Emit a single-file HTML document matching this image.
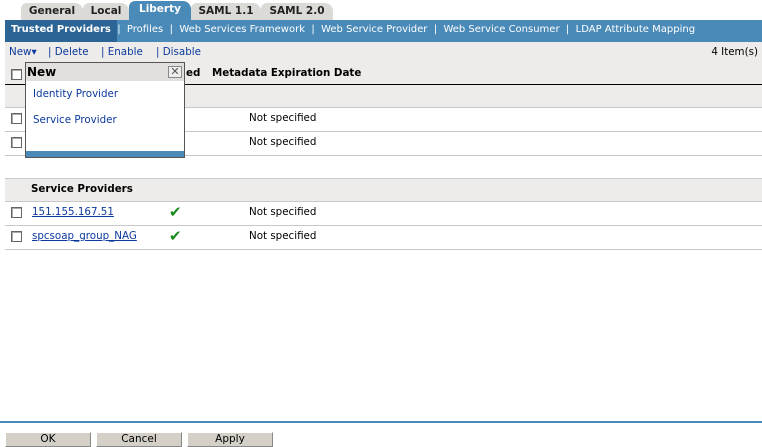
<!DOCTYPE html>
<html><head><style>
*{margin:0;padding:0;box-sizing:border-box}
body{width:762px;height:447px;background:#fff;font-family:"DejaVu Sans","Liberation Sans",sans-serif;font-size:10.3px;position:relative;overflow:hidden;color:#000}
.a{position:absolute;white-space:pre}
.tab{position:absolute;top:3px;height:17px;background:#dcdad6;border-radius:6px 8px 0 0;font-weight:bold;font-size:10.5px;padding:2px 0 0 0;text-align:center;color:#222}
.cb{position:absolute;width:11px;height:11px;border:1px solid #666;background:#fff;box-shadow:inset 1px 1px 0 #aaa}
.ln{position:absolute;left:5px;width:757px;height:1px;background:#c8c8c8}
a{color:#0b3a9c;text-decoration:underline}
.btn{position:absolute;top:432px;height:15px;background:#d4d0c8;border:1px solid #888;border-top-color:#fff;border-left-color:#fff;text-align:center;font-size:10.5px;line-height:13px}
</style></head><body>
<div class="tab" style="left:21px;width:62px">General</div>
<div class="tab" style="left:83px;width:46px">Local</div>
<div class="tab" style="left:129px;width:62px;background:#4a8ab8;color:#fff;top:1px;height:19px">Liberty</div>
<div class="tab" style="left:191px;width:70px">SAML 1.1</div>
<div class="tab" style="left:261px;width:72px">SAML 2.0</div>
<div class="a" style="left:5px;top:20px;width:757px;height:22px;background:#4a8ab8"></div>
<div class="a" style="left:5px;top:20px;width:112px;height:22px;background:#2d6496"></div>
<div class="a" style="left:11px;top:24px;color:#fff;font-size:10px"><b>Trusted Providers</b>  |  Profiles  |  Web Services Framework  |  Web Service Provider  |  Web Service Consumer  |  LDAP Attribute Mapping</div>
<div class="a" style="left:5px;top:42px;width:757px;height:42px;background:#eeecea"></div>
<div class="a" style="left:5px;top:84px;width:757px;height:1px;background:#000"></div>
<div class="a" style="left:9px;top:46px;color:#0b3a9c">New▾</div>
<div class="a" style="left:48px;top:46px;color:#0b3a9c">| Delete</div>
<div class="a" style="left:101px;top:46px;color:#0b3a9c">| Enable</div>
<div class="a" style="left:156px;top:46px;color:#0b3a9c">| Disable</div>
<div class="a" style="right:4px;top:46px">4 Item(s)</div>
<div class="a" style="left:212px;top:67px;font-weight:bold">Metadata Expiration Date</div>
<div class="a" style="left:186px;top:67px;font-weight:bold">ed</div>
<div class="cb" style="left:11px;top:69px"></div>
<div class="a" style="left:5px;top:85px;width:757px;height:22px;background:#eeecea"></div>
<div class="ln" style="top:107px"></div>
<div class="cb" style="left:11px;top:113px"></div><div class="a" style="left:249px;top:112px">Not specified</div>
<div class="ln" style="top:131px"></div>
<div class="cb" style="left:11px;top:137px"></div><div class="a" style="left:249px;top:136px">Not specified</div>
<div class="ln" style="top:155px"></div>
<div class="ln" style="top:178px"></div>
<div class="a" style="left:5px;top:179px;width:757px;height:22px;background:#eeecea"></div>
<div class="a" style="left:31px;top:183px;font-weight:bold">Service Providers</div>
<div class="ln" style="top:201px"></div>
<div class="cb" style="left:11px;top:207px"></div><div class="a" style="left:32px;top:206px"><a>151.155.167.51</a></div>
<div class="a" style="left:169px;top:203px;width:16px;height:14px;color:#1a8a1a;font-size:15px;font-weight:bold">✔</div>
<div class="a" style="left:249px;top:206px">Not specified</div>
<div class="ln" style="top:225px"></div>
<div class="cb" style="left:11px;top:231px"></div><div class="a" style="left:32px;top:230px"><a>spcsoap_group_NAG</a></div>
<div class="a" style="left:169px;top:227px;width:16px;height:14px;color:#1a8a1a;font-size:15px;font-weight:bold">✔</div>
<div class="a" style="left:249px;top:230px">Not specified</div>
<div class="ln" style="top:249px"></div>
<div class="a" style="left:25px;top:62px;width:160px;height:96px;background:#fff;border:1px solid #555"></div>
<div class="a" style="left:26px;top:63px;width:158px;height:18px;background:#e2e0dc"></div>
<div class="a" style="left:27px;top:65px;font-weight:bold;font-size:12px">New</div>
<div class="a" style="left:168px;top:66px;width:14px;height:12px;border:1px solid #888;background:#eee;font-size:11px;line-height:10px;text-align:center;color:#555">✕</div>
<div class="a" style="left:33px;top:88px;color:#0b3a9c">Identity Provider</div>
<div class="a" style="left:33px;top:114px;color:#0b3a9c">Service Provider</div>
<div class="a" style="left:26px;top:151px;width:158px;height:6px;background:#4a8ab8"></div>
<div class="a" style="left:0;top:421px;width:762px;height:2px;background:#4a8ab8"></div>
<div class="btn" style="left:5px;width:86px">OK</div>
<div class="btn" style="left:96px;width:86px">Cancel</div>
<div class="btn" style="left:187px;width:86px">Apply</div>
</body></html>
